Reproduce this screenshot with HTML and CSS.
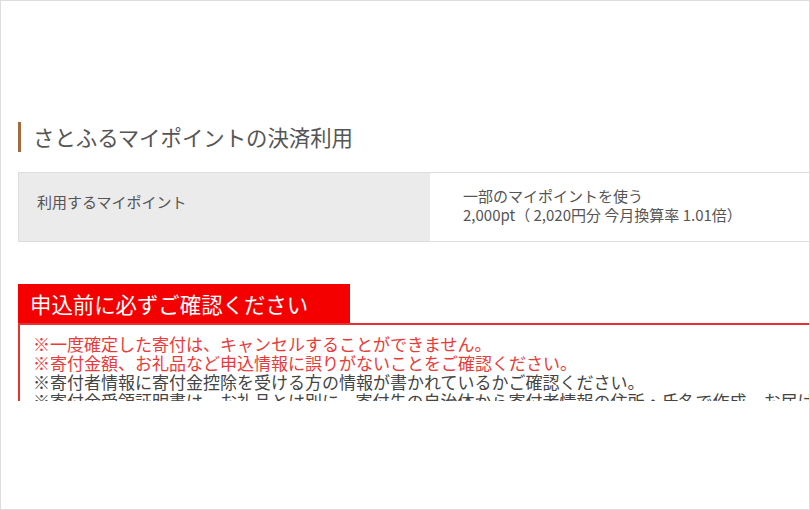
FILE: index.html
```html
<!DOCTYPE html>
<html>
 <head>
  <meta charset="utf-8">
  <link rel="stylesheet" href="styles.css">
 </head>
 <body>
  <div class="frame">
   <div class="view">
    <div class="content">
     <h2 class="ttl">さとふるマイポイントの決済利用</h2>

     <div class="point-row">
      <div class="point-label">利用するマイポイント</div>
      <div class="point-value">
       一部のマイポイントを使う<br>
       2,000pt（ 2,020円分 今月換算率 1.01倍）
      </div>
     </div>

     <div class="notice">
      <div class="notice-head">申込前に必ずご確認ください</div>
      <div class="notice-body">
       <p class="red">※一度確定した寄付は、キャンセルすることができません。</p>
       <p class="red">※寄付金額、お礼品など申込情報に誤りがないことをご確認ください。</p>
       <p>※寄付者情報に寄付金控除を受ける方の情報が書かれているかご確認ください。</p>
       <p>※寄付金受領証明書は、お礼品とは別に、寄付先の自治体から寄付者情報の住所・氏名で作成、お届けします。</p>
      </div>
     </div>
    </div>
   </div>
  </div>
 </body>
</html>
```

FILE: styles.css
```css
body {
  margin: 0;
  font-family: "Noto Sans CJK JP", "Noto Sans", sans-serif;
  color: #555;
}

.frame {
  width: 810px;
  height: 510px;
  border: 1px solid #ddd;
  box-sizing: border-box;
  overflow: hidden;
  background: #fff;
}
.view {
  height: 400px;
  overflow: hidden;
  padding: 121px 0 0 17px;
  box-sizing: border-box;
}
.content {
  width: 900px;
}

.ttl {
  margin: 0;
  border-left: 3px solid #a36a3a;
  padding-left: 12px;
  font-size: 21.4px;
  font-weight: normal;
  line-height: 30px;
  color: #555;
}

.point-row {
  display: grid;
  grid-template-columns: 412px 1fr;
  margin-top: 20px;
  border-top: 1px solid #ddd;
  border-bottom: 1px solid #ddd;
  font-size: 15px;
  color: #555;
}
.point-label {
  background: #ebebeb;
  border-left: 1px solid #ddd;
  padding: 19px 18px 20px;
  line-height: 20px;
}
.point-value {
  padding: 13px 33px 14px;
  line-height: 19px;
  height: 41px;
}

.notice {
  margin-top: 42px;
}
.notice-head {
  display: inline-block;
  background: #f50000;
  color: #fff;
  font-size: 21.4px;
  line-height: 39px;
  padding: 0 15px 0 12px;
  width: 305px;
}
.notice-body {
  border: 2px solid #e83232;
  padding: 9px 13px;
  font-size: 17px;
  line-height: 19px;
  color: #444;
}
.notice-body p {
  margin: 0;
  white-space: nowrap;
}
.red {
  color: #ea3a3a;
}
```
